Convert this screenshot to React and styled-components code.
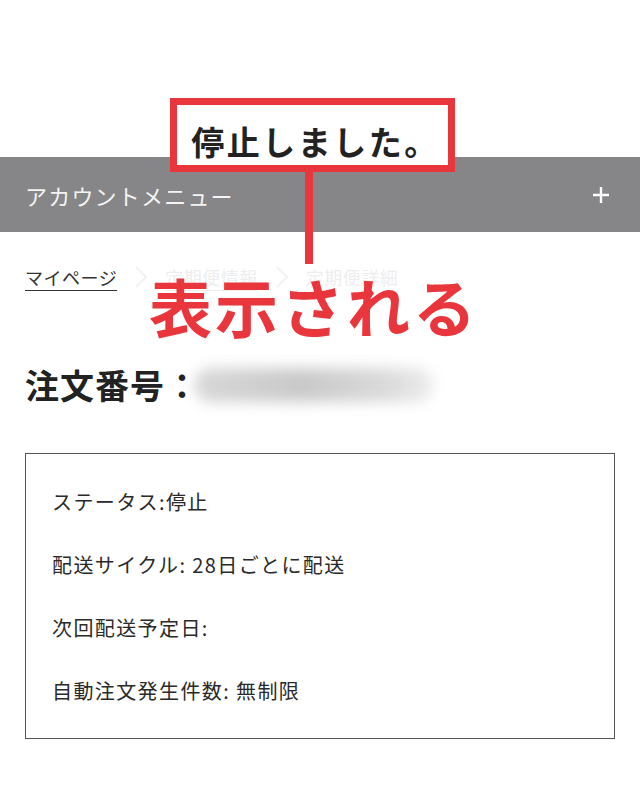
import React from 'react'
import styled, { createGlobalStyle } from 'styled-components'

const GlobalStyle = createGlobalStyle`
  body {
    margin: 0;
    background: #fff;
    font-family: "Noto Sans CJK JP", "Noto Sans", sans-serif;
    color: #222;
  }
`

const RED = '#e9363c'

const Page = styled.div`
  position: relative;
  width: 640px;
  height: 800px;
  overflow: hidden;
  background: #fff;
`

const Notice = styled.div`
  height: 157px;
`

const Callout = styled.div`
  position: absolute;
  left: 170px;
  top: 98px;
  width: 285px;
  height: 74px;
  box-sizing: border-box;
  border: 7px solid ${RED};
  background: #fff;
  z-index: 3;
  display: flex;
  align-items: flex-end;
  justify-content: center;
  padding: 0 0 2px 6px;
`

const NoticeText = styled.div`
  font-size: 33px;
  font-weight: 700;
  line-height: 44px;
  color: #222;
  letter-spacing: 2.5px;
`

const Pointer = styled.div`
  position: absolute;
  left: 305px;
  top: 170px;
  width: 8px;
  height: 94px;
  background: ${RED};
  z-index: 3;
`

const Label = styled.div`
  position: absolute;
  left: 124px;
  top: 252px;
  width: 380px;
  height: 94px;
  background: rgba(255, 255, 255, 0.72);
  z-index: 2;
  display: flex;
  align-items: center;
  justify-content: center;
  padding-top: 10px;
  box-sizing: border-box;
  font-size: 63px;
  font-weight: 700;
  color: ${RED};
  letter-spacing: 3px;
`

const MenuBar = styled.div`
  height: 75px;
  background: #868587;
  display: flex;
  align-items: center;
  justify-content: space-between;
  padding: 0 30px 0 25px;
  color: #f4f4f4;
  font-size: 22px;
  letter-spacing: 1.2px;
`

const Crumbs = styled.nav`
  display: flex;
  align-items: center;
  gap: 18px;
  padding: 33px 25px 0;
  font-size: 18px;
  line-height: 24px;
  letter-spacing: 0.5px;
`

const Crumb = styled.span`
  color: ${p => (p.active ? '#333' : '#bdbdbd')};
  text-decoration: ${p => (p.linked ? 'underline' : 'none')};
  text-underline-offset: 5px;
`

const Chevron = () => (
  <svg width="12" height="22" viewBox="0 0 12 22">
    <polyline points="1,1 11,11 1,21" fill="none" stroke="#d0d0d0" strokeWidth="2" />
  </svg>
)

const Plus = () => (
  <svg width="18" height="18" viewBox="0 0 18 18">
    <path d="M9 1v16M1 9h16" stroke="#fff" strokeWidth="2.4" />
  </svg>
)

const OrderHeading = styled.h1`
  margin: 74px 0 0;
  padding: 0 25px;
  display: flex;
  align-items: center;
  font-size: 34px;
  line-height: 44px;
  font-weight: 700;
  color: #222;
  letter-spacing: 1px;
`

const Blurred = styled.span`
  display: inline-block;
  width: 240px;
  height: 34px;
  margin-left: -6px;
  border-radius: 17px;
  background: linear-gradient(90deg, #d8d8d8, #c9c9c9 45%, #dadada 80%, #eee);
  filter: blur(7px);
`

const InfoBox = styled.div`
  margin: 46px 25px 0;
  border: 1.5px solid #555;
  padding: 34px 26px 33px;
  display: flex;
  flex-direction: column;
  gap: 35px;
`

const InfoRow = styled.div`
  font-size: 20px;
  line-height: 28px;
  color: #2a2a2a;
  letter-spacing: 1.4px;
`

export default function App() {
  return (
    <>
      <GlobalStyle />
      <Page>
        <Notice />
        <Callout>
          <NoticeText>停止しました。</NoticeText>
        </Callout>
        <Pointer />
        <Label>表示される</Label>
        <MenuBar>
          <span>アカウントメニュー</span>
          <Plus />
        </MenuBar>
        <Crumbs>
          <Crumb active linked>マイページ</Crumb>
          <Chevron />
          <Crumb linked>定期便情報</Crumb>
          <Chevron />
          <Crumb>定期便詳細</Crumb>
        </Crumbs>
        <OrderHeading>
          注文番号：<Blurred />
        </OrderHeading>
        <InfoBox>
          <InfoRow>ステータス:停止</InfoRow>
          <InfoRow>配送サイクル: 28日ごとに配送</InfoRow>
          <InfoRow>次回配送予定日:</InfoRow>
          <InfoRow>自動注文発生件数: 無制限</InfoRow>
        </InfoBox>
      </Page>
    </>
  )
}
